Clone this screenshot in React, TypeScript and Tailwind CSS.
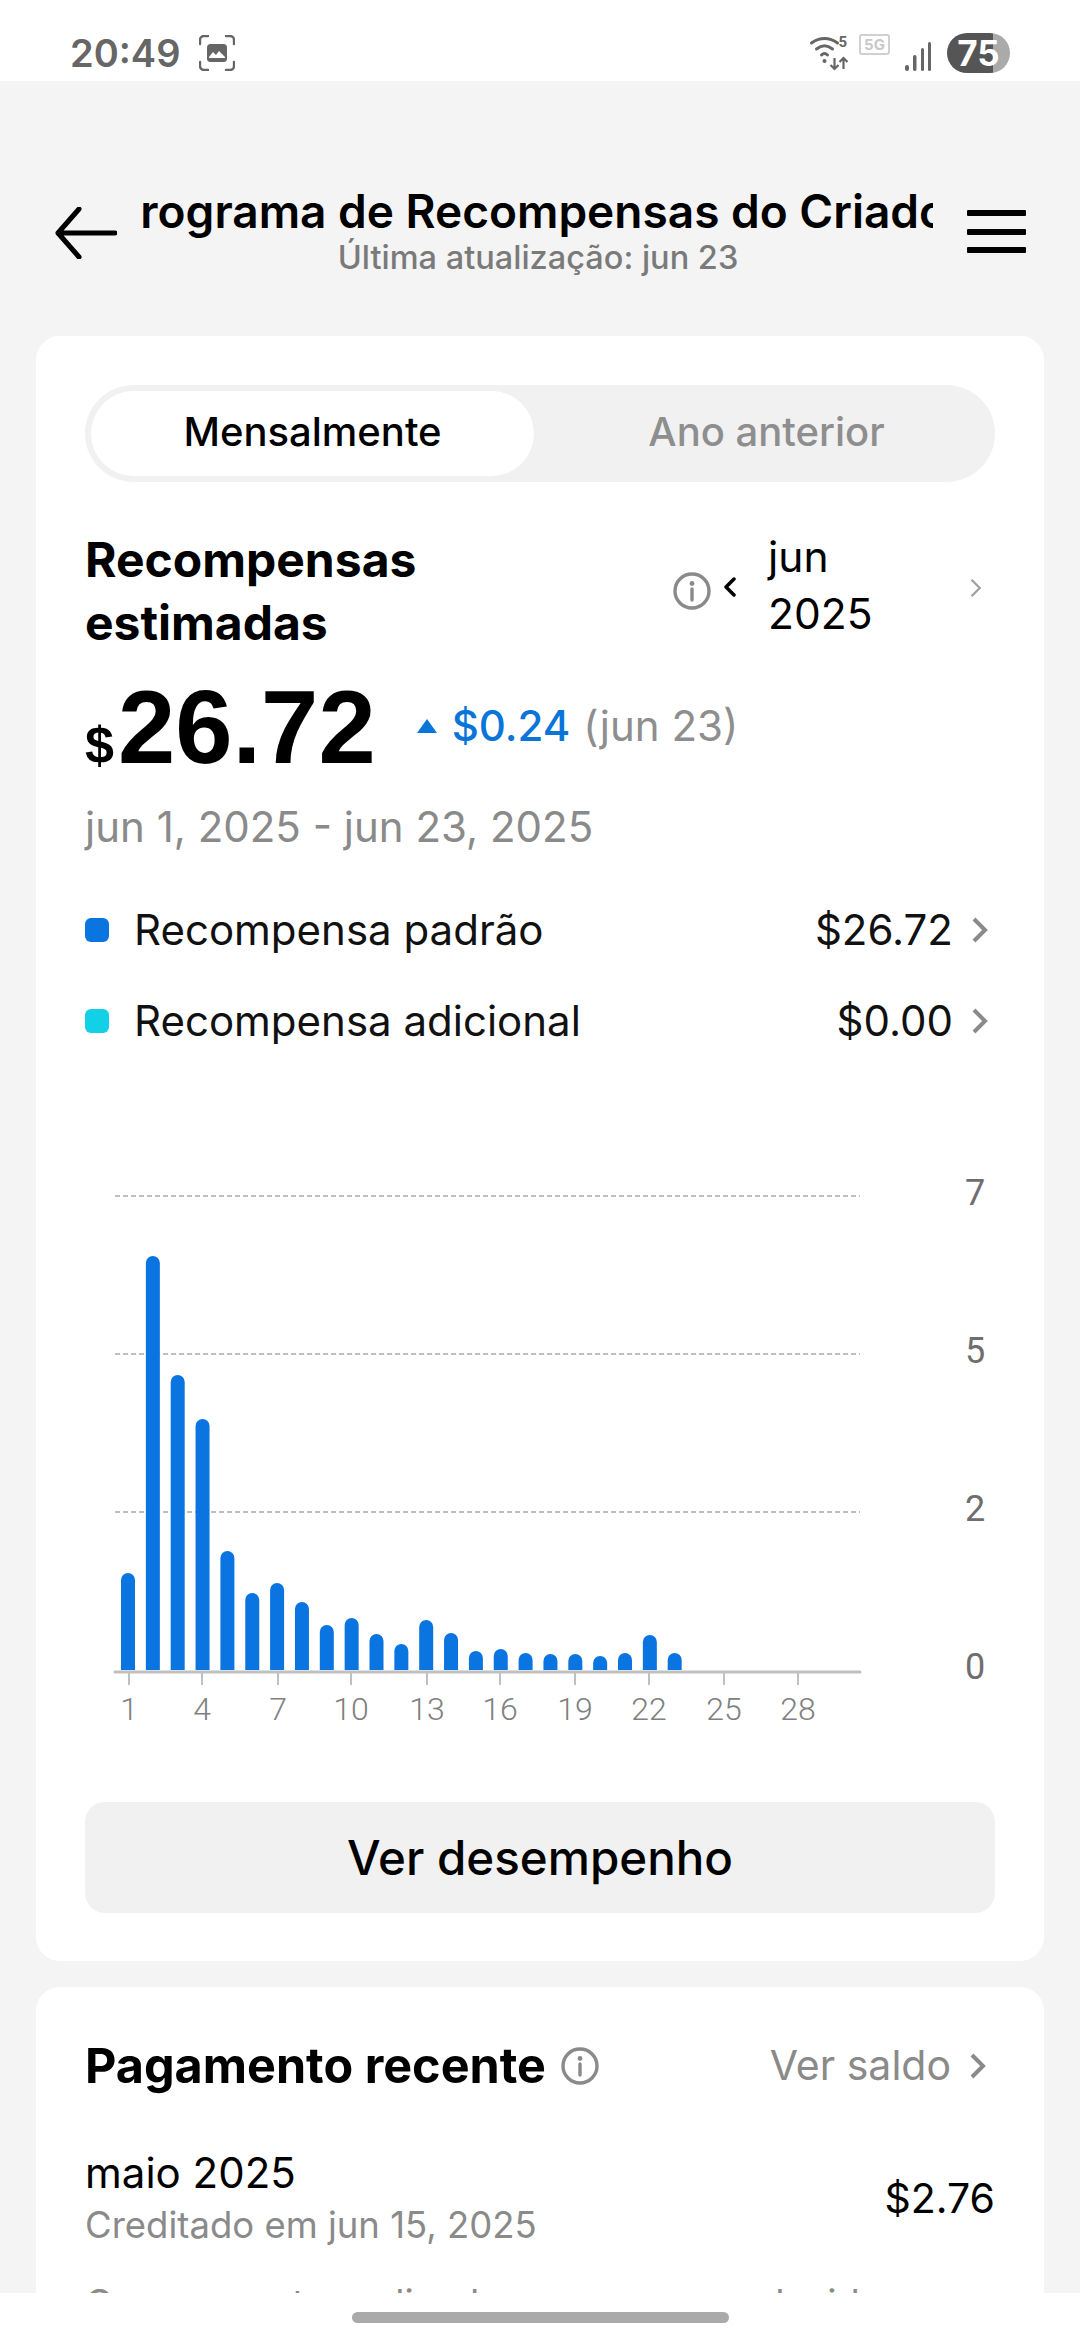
import React from 'react';

const barHeights = [96, 413, 294, 250, 118, 76, 86, 67, 44, 51, 35, 25, 49, 36, 18, 20, 16, 15, 15, 13, 16, 34, 16];
const ticks = [
  { x: 44, label: '1' },
  { x: 117, label: '4' },
  { x: 193, label: '7' },
  { x: 266, label: '10' },
  { x: 342, label: '13' },
  { x: 415, label: '16' },
  { x: 490, label: '19' },
  { x: 564, label: '22' },
  { x: 639, label: '25' },
  { x: 713, label: '28' },
];
const gridLines = [
  { y: 26, label: '7' },
  { y: 184, label: '5' },
  { y: 342, label: '2' },
];
const BASE_Y = 500;

function InfoIcon({ size = 38 }: { size?: number }) {
  return (
    <svg width={size} height={size} viewBox="0 0 38 38" fill="none" className="shrink-0">
      <circle cx="19" cy="19" r="17" stroke="#8a8a8a" strokeWidth="3.4" />
      <circle cx="19" cy="11.5" r="2.4" fill="#8a8a8a" />
      <path d="M19 17v11" stroke="#8a8a8a" strokeWidth="3.4" strokeLinecap="round" />
    </svg>
  );
}

function Chevron({ color = '#8a8a8a', width = 16, height = 26, strokeWidth = 4 }: { color?: string; width?: number; height?: number; strokeWidth?: number }) {
  return (
    <svg width={width} height={height} viewBox="0 0 16 26" fill="none" className="shrink-0">
      <path d="M2 2l11 11L2 24" stroke={color} strokeWidth={strokeWidth} />
    </svg>
  );
}

function StatusBar() {
  return (
    <div className="h-[81px] shrink-0 bg-white flex items-center justify-between pl-[70px] pr-[70px] pt-[24px] text-[#666]">
      <div className="flex items-center gap-[19px]">
        <span className="text-[38px] font-semibold leading-none">20:49</span>
        <svg width="36" height="36" viewBox="0 0 36 36" fill="none">
          <path d="M1 9V5a4 4 0 0 1 4-4h4M27 1h4a4 4 0 0 1 4 4v4M35 27v4a4 4 0 0 1-4 4h-4M9 35H5a4 4 0 0 1-4-4v-4" stroke="#666" strokeWidth="2.4" strokeLinecap="round" />
          <rect x="8" y="9" width="20" height="18" rx="3.5" fill="#666" />
          <path d="M10 22l4-5 3 3 3-4 6 6v1H10z" fill="#fff" />
        </svg>
      </div>
      <div className="flex items-center">
        <svg width="41" height="38" viewBox="0 0 38 38" fill="none" className="mr-[9px]">
          <path d="M1 9C9 3 19 3 27 9M6 15c5-4 11-4 16 0M11 21c2-2 4-2 6 0" stroke="#666" strokeWidth="3" strokeLinecap="round" />
          <circle cx="14" cy="27" r="2" fill="#666" />
          <path d="M24 24v11m-4-4l4 4 4-4M33 35V24m-4 4l4-4 4 4" stroke="#666" strokeWidth="2.2" />
          <text x="28" y="13" fontSize="15" fontWeight="700" fill="#666" fontFamily="Roboto, sans-serif">5</text>
        </svg>
        <span className="w-[31px] h-[21px] border-2 border-[#d0d0d0] rounded-[3px] text-[#c8c8c8] text-[15px] leading-[17px] font-bold flex items-center justify-center mb-[16px]">5G</span>
        <svg width="30" height="30" viewBox="0 0 30 30" className="ml-[14px] mr-[13px] mt-[6px]">
          <rect x="1" y="24" width="4" height="6" rx="2" fill="#666" />
          <rect x="9" y="14" width="3.5" height="16" rx="1.7" fill="#666" />
          <rect x="17" y="7" width="3" height="23" rx="1.5" fill="#666" />
          <rect x="24" y="1" width="3" height="29" rx="1.5" fill="#666" />
        </svg>
        <div className="relative w-[63px] h-[40px] rounded-full bg-[linear-gradient(to_right,#555_46px,#aaaaaa_46px)] flex items-center justify-center">
          <span className="text-white text-[35px] leading-[40px] font-bold">75</span>
        </div>
      </div>
    </div>
  );
}

function Header() {
  return (
    <div className="h-[255px] flex items-center pl-[55px] pr-[54px] pt-[70px] pb-[22px]">
      <svg width="62" height="52" viewBox="0 0 62 52" fill="none" className="shrink-0">
        <path d="M60 26H3M24 2L3 26l21 24" stroke="#000" strokeWidth="5" strokeLinecap="round" strokeLinejoin="round" />
      </svg>
      <div className="ml-[26px] w-[790px] flex flex-col items-center">
        <div className="w-full flex justify-center overflow-hidden -mt-[5px]">
          <span className="whitespace-nowrap text-[46px] leading-[56px] font-semibold text-black shrink-0">Programa de Recompensas do Criador</span>
        </div>
        <span className="text-[32.5px] leading-[38px] text-[#7a7a7a] font-medium">Última atualização: jun 23</span>
      </div>
      <div className="ml-auto mb-[2px] w-[59px] h-[43px] shrink-0 flex flex-col justify-between">
        <div className="h-[6px] bg-black rounded-[1px]" />
        <div className="h-[6px] bg-black rounded-[1px]" />
        <div className="h-[6px] bg-black rounded-[1px]" />
      </div>
    </div>
  );
}

function Chart() {
  return (
    <svg width="910" height="560" viewBox="0 0 910 560" className="block">
      {gridLines.map((g) => (
        <line key={g.y} x1="30" x2="775" y1={g.y} y2={g.y} stroke="#aaaaaa" strokeWidth="1.5" strokeDasharray="5 3" />
      ))}
      {barHeights.map((h, i) => (
        <path
          key={i}
          d={`M${36 + i * 24.85} ${BASE_Y}v${-(h - 6)}a7 7 0 0 1 14 0v${h - 6}z`}
          fill="#0a75e0"
        />
      ))}
      <line x1="30" x2="775" y1={BASE_Y + 2} y2={BASE_Y + 2} stroke="#c0c0c0" strokeWidth="3" strokeLinecap="round" />
      {ticks.map((t) => (
        <g key={t.label}>
          <line x1={t.x} x2={t.x} y1={BASE_Y + 2} y2={BASE_Y + 15} stroke="#c0c0c0" strokeWidth="2" />
          <text x={t.x} y={BASE_Y + 50} textAnchor="middle" fontSize="32" fill="#808080" fontFamily="Roboto, sans-serif" fontWeight="300">
            {t.label}
          </text>
        </g>
      ))}
      {gridLines.map((g) => (
        <text key={g.y} x="890" y={g.y + 9} textAnchor="middle" fontSize="36" fill="#6e6e6e" fontFamily="Roboto, sans-serif">
          {g.label}
        </text>
      ))}
      <text x="890" y={BASE_Y + 9} textAnchor="middle" fontSize="36" fill="#6e6e6e" fontFamily="Roboto, sans-serif">0</text>
    </svg>
  );
}

function RewardRow({ color, label, value }: { color: string; label: string; value: string }) {
  return (
    <div className="flex items-center h-[91px]">
      <div className={`w-[24px] h-[24px] rounded-[6px] ${color}`} />
      <span className="ml-[25px] text-[42px] text-[#111]">{label}</span>
      <span className="ml-auto text-[42px] text-[#111]">{value}</span>
      <div className="ml-[19px] mr-[7px]">
        <Chevron />
      </div>
    </div>
  );
}

export default function App() {
  return (
    <div className="w-[1080px] h-[2340px] flex flex-col overflow-hidden bg-[#f4f4f4] font-['Inter',sans-serif]">
      <StatusBar />
      <div className="flex-1 min-h-0 overflow-hidden">
        <Header />
        <div className="mx-[36px] h-[1625px] bg-white rounded-[24px] px-[49px] pt-[49px]">
          <div className="h-[97px] rounded-full bg-[#f1f1f1] p-[6px] flex">
            <div className="w-[443px] pb-[3px] rounded-full bg-white flex items-center justify-center text-[40px] font-medium text-black">
              Mensalmente
            </div>
            <div className="flex-1 pl-[10px] pb-[3px] flex items-center justify-center text-[40px] font-medium text-[#8e8e8e]">
              Ano anterior
            </div>
          </div>

          <div className="mt-[46px] flex items-center">
            <h2 className="w-[400px] text-[48px] leading-[63px] font-bold text-black">Recompensas estimadas</h2>
            <div className="ml-auto flex items-center">
              <InfoIcon />
              <div className="ml-[12px] -mt-[8px]">
                <svg width="14" height="20" viewBox="0 0 14 20" fill="none" className="rotate-180">
                  <path d="M3 2l8 8-8 8" stroke="#000" strokeWidth="3.5" strokeLinecap="round" strokeLinejoin="round" />
                </svg>
              </div>
              <div className="ml-[31px] mb-[12px] w-[202px] flex flex-col text-[42.5px] leading-[57px] text-black">
                <span>jun</span>
                <span>2025</span>
              </div>
              <div className="-mt-[6px]">
                <Chevron width={12} height={20} color="#a0a0a0" strokeWidth={3} />
              </div>
              <div className="w-[13px]" />
            </div>
          </div>

          <div className="mt-[24px] flex items-center">
            <div className="flex items-baseline">
              <span className="text-[52px] font-bold text-black font-['Liberation_Sans',sans-serif]">$</span>
              <span className="ml-[4px] text-[103px] leading-[100px] font-bold text-black font-['Liberation_Sans',sans-serif]">26.72</span>
            </div>
            <svg width="20" height="14" viewBox="0 0 20 14" className="ml-[41px] mb-[10px]">
              <path d="M10 0l10 14H0z" fill="#0a75d8" />
            </svg>
            <span className="ml-[15px] mb-[12px] text-[42px] font-medium text-[#0a75d8]">$0.24</span>
            <span className="ml-[13px] mb-[12px] text-[42px] text-[#8e8e8e]">(jun 23)</span>
          </div>

          <div className="mt-[18px] text-[42px] leading-[50px] text-[#8a8a8a]">jun 1, 2025 - jun 23, 2025</div>

          <div className="mt-[32px]">
            <RewardRow color="bg-[#0a75e0]" label="Recompensa padrão" value="$26.72" />
            <RewardRow color="bg-[#12d0e6]" label="Recompensa adicional" value="$0.00" />
          </div>

          <div className="mt-[104px]">
            <Chart />
          </div>

          <div className="mt-[72px] h-[111px] rounded-[20px] bg-[#f1f1f2] flex items-center justify-center text-[47.5px] font-medium text-black">
            Ver desempenho
          </div>
        </div>

        <div className="mt-[26px] mx-[36px] h-[400px] bg-white rounded-[24px] px-[49px] pt-[50px]">
          <div className="flex items-center h-[60px] -mt-[1px]">
            <h2 className="text-[48.5px] font-bold text-black">Pagamento recente</h2>
            <div className="ml-[15px]">
              <InfoIcon />
            </div>
            <span className="ml-auto text-[41px] text-[#8a8a8a]">Ver saldo</span>
            <div className="ml-[19px] mr-[9px]">
              <Chevron />
            </div>
          </div>
          <div className="mt-[51px] flex items-center justify-between">
            <div className="flex flex-col">
              <span className="text-[42px] leading-[52px] text-black">maio 2025</span>
              <span className="text-[36.5px] leading-[52px] text-[#8a8a8a]">Creditado em jun 15, 2025</span>
            </div>
            <span className="text-[41px] text-black">$2.76</span>
          </div>
          <div className="mt-[24px] text-[38px] text-[#8a8a8a] whitespace-nowrap">O pagamento realizado com sucesso devido a</div>
        </div>
      </div>
      <div className="h-[47px] shrink-0 bg-white flex justify-center pt-[19px]">
        <div className="w-[377px] h-[11px] rounded-full bg-[#aaaaaa]" />
      </div>
    </div>
  );
}
